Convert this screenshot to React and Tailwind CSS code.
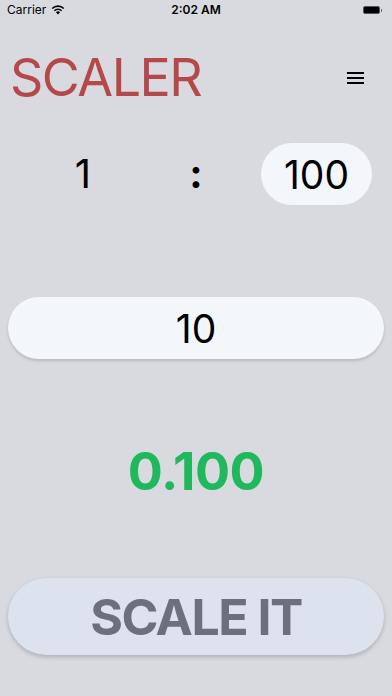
import React, { useState } from "react";

const StatusBar = () => (
  <div className="h-[20px] flex items-center justify-between px-[7px] text-[12px] text-black relative">
    <div className="flex items-center gap-[5px]">
      <span>Carrier</span>
      <svg width="14" height="10" viewBox="0 0 14 10">
        <path d="M7 9.5 L4.9 7.3 A3 3 0 0 1 9.1 7.3 Z" fill="black" />
        <path d="M2.8 5.2 A6 6 0 0 1 11.2 5.2 L10.1 6.3 A4.4 4.4 0 0 0 3.9 6.3 Z" fill="black" />
        <path d="M0.6 3 A9.1 9.1 0 0 1 13.4 3 L12.3 4.1 A7.5 7.5 0 0 0 1.7 4.1 Z" fill="black" />
      </svg>
    </div>
    <span className="absolute left-1/2 -translate-x-1/2 font-semibold">2:02 AM</span>
    <div className="flex items-center gap-[1px] pr-[3px]">
      <div className="w-[17px] h-[8px] rounded-[2px] bg-black border border-[#555]" />
      <div className="w-[1.5px] h-[3px] bg-black/60 rounded-r" />
    </div>
  </div>
);

export default function App() {
  const [value, setValue] = useState("10");

  return (
    <div
      className="w-[392px] h-[696px] bg-[#d9dadf] overflow-hidden flex flex-col"
      style={{ fontFamily: "Inter, 'Noto Sans', sans-serif" }}
    >
      <StatusBar />

      {/* header */}
      <div className="mt-[32px] h-[52px] flex items-center justify-between pl-[10px] pr-[28px]">
        <h1 className="text-[52px] leading-none text-[#b5484a] tracking-[-1.5px]">SCALER</h1>
        <div className="flex flex-col gap-[3px]">
          <div className="w-[17px] h-[2px] bg-black" />
          <div className="w-[17px] h-[2px] bg-black" />
          <div className="w-[17px] h-[2px] bg-black" />
        </div>
      </div>

      {/* ratio */}
      <div className="mt-[39px] h-[62px] flex items-center">
        <div className="w-[166px] text-center text-[40px] leading-none text-black">1</div>
        <div className="w-[60px] text-center text-[40px] leading-none font-bold text-black">:</div>
        <div className="ml-[35px] w-[111px] h-[62px] rounded-full bg-[#f3f6fb] flex items-center justify-center text-[39px] leading-none text-black">
          100
        </div>
      </div>

      {/* input */}
      <div className="mt-[92px] mx-[8px] h-[62px] rounded-full bg-[#f3f6fb] shadow-[0_2px_3px_rgba(0,0,0,0.15)] flex items-center justify-center">
        <input
          value={value}
          onChange={(e) => setValue(e.target.value)}
          className="w-full bg-transparent text-center text-[39px] leading-none text-black outline-none"
        />
      </div>

      {/* result */}
      <div className="mt-[87px] h-[52px] text-center text-[52px] leading-none font-bold text-[#1fb85c] tracking-[-0.5px]">
        0.100
      </div>

      {/* button */}
      <button className="mt-[80px] mx-[8px] h-[77px] rounded-full bg-[#dde2ef] shadow-[0_2px_4px_rgba(0,0,0,0.2)] text-[50px] font-bold text-[#6b707a] tracking-[-1.5px] leading-none">
        SCALE IT
      </button>
    </div>
  );
}
